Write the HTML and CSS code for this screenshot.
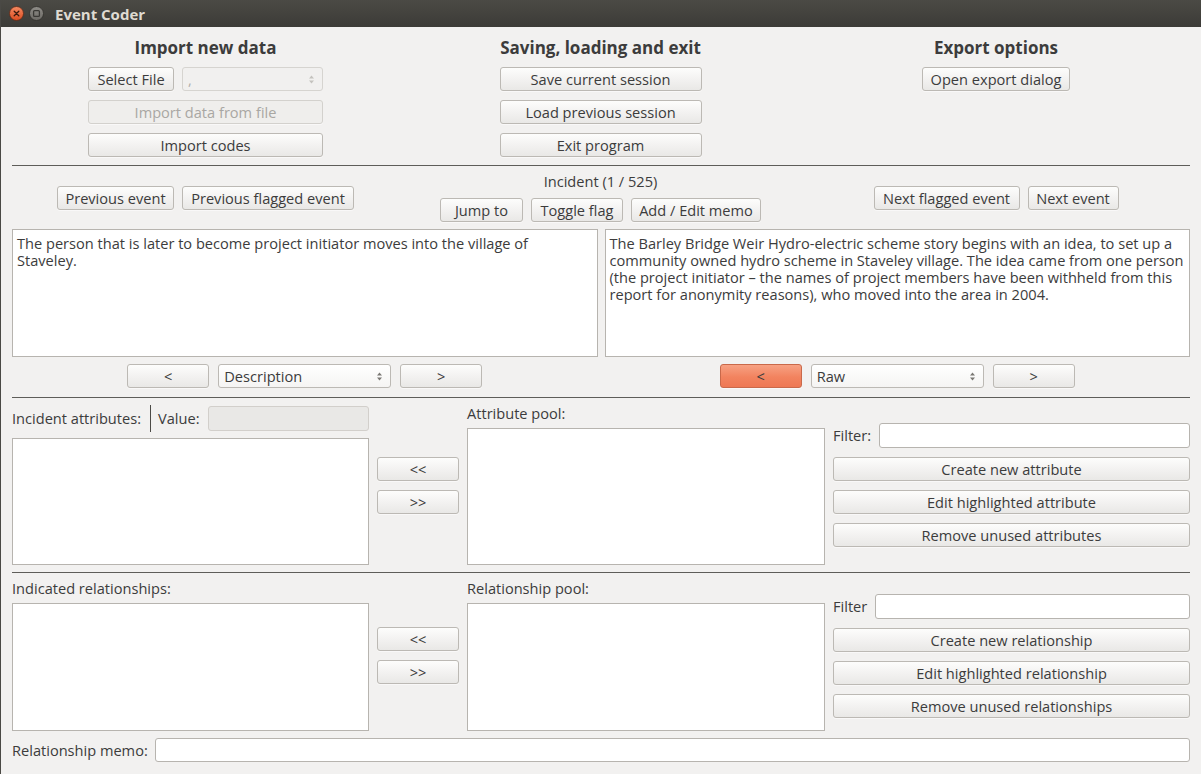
FILE: index.html
```html
<!DOCTYPE html>
<html>
<head>
<meta charset="utf-8">
<title>Event Coder</title>
<link rel="stylesheet" href="styles.css">
</head>
<body>
<div class="window">
  <div class="titlebar">
    <span class="tb-btn tb-close"><svg width="15" height="15" viewBox="0 0 15 15"><defs><linearGradient id="gc" x1="0" y1="0" x2="0" y2="1"><stop offset="0" stop-color="#f58b63"/><stop offset="1" stop-color="#dc4c20"/></linearGradient></defs><circle cx="7.5" cy="7.5" r="7" fill="url(#gc)" stroke="#5a2a18" stroke-width="0.8"/><path d="M5.2 5.2 L9.8 9.8 M9.8 5.2 L5.2 9.8" stroke="#3a1a0e" stroke-width="1.3" stroke-linecap="round"/></svg></span>
    <span class="tb-btn tb-max"><svg width="15" height="15" viewBox="0 0 15 15"><defs><linearGradient id="gm" x1="0" y1="0" x2="0" y2="1"><stop offset="0" stop-color="#8f8d88"/><stop offset="1" stop-color="#6c6a65"/></linearGradient></defs><circle cx="7.5" cy="7.5" r="7" fill="url(#gm)" stroke="#2e2d2a" stroke-width="0.8"/><rect x="4.6" y="4.6" width="5.8" height="5.8" rx="1" fill="none" stroke="#3a3935" stroke-width="1.3"/></svg></span>
    <span class="tb-title">Event Coder</span>
  </div>

  <div class="content">
    <div class="top">
      <div class="col">
        <h2 class="heading">Import new data</h2>
        <div class="stack w235">
          <div class="pair">
            <button class="btn w86">Select File</button>
            <div class="combo combo-disabled w141"><span>,</span><svg class="arrows" width="7" height="11" viewBox="0 0 7 11"><path d="M3.5 1.5 L6 4.5 L1 4.5 Z M1 6.5 L6 6.5 L3.5 9.5 Z" fill="#c4c2be"/></svg></div>
          </div>
          <button class="btn btn-disabled">Import data from file</button>
          <button class="btn">Import codes</button>
        </div>
      </div>
      <div class="col">
        <h2 class="heading">Saving, loading and exit</h2>
        <div class="stack w202">
          <button class="btn">Save current session</button>
          <button class="btn">Load previous session</button>
          <button class="btn">Exit program</button>
        </div>
      </div>
      <div class="col">
        <h2 class="heading">Export options</h2>
        <div class="stack w148">
          <button class="btn">Open export dialog</button>
        </div>
      </div>
    </div>

    <div class="sep sep-top"></div>

    <div class="nav">
      <div class="nav-side">
        <button class="btn w117">Previous event</button>
        <button class="btn w172">Previous flagged event</button>
      </div>
      <div class="nav-mid">
        <div class="incident">Incident (1 / 525)</div>
        <div class="nav-row">
          <button class="btn w83">Jump to</button>
          <button class="btn w92">Toggle flag</button>
          <button class="btn w130">Add / Edit memo</button>
        </div>
      </div>
      <div class="nav-side">
        <button class="btn w146">Next flagged event</button>
        <button class="btn w91">Next event</button>
      </div>
    </div>

    <div class="texts">
      <div class="textbox">The person that is later to become project initiator moves into the village of<br>Staveley.</div>
      <div class="textbox">The Barley Bridge Weir Hydro-electric scheme story begins with an idea, to set up a<br>community owned hydro scheme in Staveley village. The idea came from one person<br>(the project initiator – the names of project members have been withheld from this<br>report for anonymity reasons), who moved into the area in 2004.</div>
    </div>

    <div class="views">
      <div class="view-ctrl">
        <button class="btn w82">&lt;</button>
        <div class="combo w173"><span>Description</span><svg class="arrows" width="7" height="11" viewBox="0 0 7 11"><path d="M3.5 1.5 L6 4.5 L1 4.5 Z M1 6.5 L6 6.5 L3.5 9.5 Z" fill="#7a7874"/></svg></div>
        <button class="btn w82">&gt;</button>
      </div>
      <div class="view-ctrl">
        <button class="btn btn-accent w82">&lt;</button>
        <div class="combo w173"><span>Raw</span><svg class="arrows" width="7" height="11" viewBox="0 0 7 11"><path d="M3.5 1.5 L6 4.5 L1 4.5 Z M1 6.5 L6 6.5 L3.5 9.5 Z" fill="#7a7874"/></svg></div>
        <button class="btn w82">&gt;</button>
      </div>
    </div>

    <div class="sep sep-mid"></div>

    <div class="pane pane-attr">
      <div class="pane-left">
        <div class="attr-head">
          <span class="label">Incident attributes:</span>
          <span class="vsep"></span>
          <span class="label">Value:</span>
          <div class="field field-disabled"></div>
        </div>
        <div class="list list-attr"></div>
      </div>
      <div class="pane-mid">
        <button class="btn">&lt;&lt;</button>
        <button class="btn">&gt;&gt;</button>
      </div>
      <div class="pane-pool">
        <div class="label">Attribute pool:</div>
        <div class="list"></div>
      </div>
      <div class="pane-right">
        <div class="filter-row">
          <span class="label">Filter:</span>
          <div class="field"></div>
        </div>
        <button class="btn">Create new attribute</button>
        <button class="btn">Edit highlighted attribute</button>
        <button class="btn">Remove unused attributes</button>
      </div>
    </div>

    <div class="sep sep-low"></div>

    <div class="pane pane-rel">
      <div class="pane-left">
        <div class="label">Indicated relationships:</div>
        <div class="list"></div>
      </div>
      <div class="pane-mid">
        <button class="btn">&lt;&lt;</button>
        <button class="btn">&gt;&gt;</button>
      </div>
      <div class="pane-pool">
        <div class="label">Relationship pool:</div>
        <div class="list"></div>
      </div>
      <div class="pane-right">
        <div class="filter-row">
          <span class="label">Filter</span>
          <div class="field"></div>
        </div>
        <button class="btn">Create new relationship</button>
        <button class="btn">Edit highlighted relationship</button>
        <button class="btn">Remove unused relationships</button>
      </div>
    </div>

    <div class="memo">
      <span class="label">Relationship memo:</span>
      <div class="field field-memo"></div>
    </div>
  </div>
</div>
</body>
</html>
```
FILE: styles.css
```css
* { box-sizing: border-box; }
html, body { margin: 0; padding: 0; }
body {
  width: 1201px;
  height: 774px;
  overflow: hidden;
  background: #f2f1f0;
  font-family: "Open Sans", "DejaVu Sans", sans-serif;
  font-size: 14.6px;
  color: #3c3c3c;
}
.window {
  height: 774px;
  display: flex;
  flex-direction: column;
  border-left: 1px solid #4a4945;
}
.titlebar {
  height: 27px;
  flex: none;
  background: linear-gradient(#4b4a45, #3c3b37);
  display: flex;
  align-items: center;
  padding-left: 8px;
}
.tb-btn { display: flex; width: 15px; height: 15px; }
.tb-max { margin-left: 5px; }
.tb-title {
  margin-left: 11px;
  color: #dfdbd2;
  font-weight: 700;
  font-size: 15px;
}
.content {
  flex: 1;
  padding: 0 11px;
  display: flex;
  flex-direction: column;
}
.top {
  display: grid;
  grid-template-columns: 387px 1fr 388px;
  padding-top: 10px;
}
.col { display: flex; flex-direction: column; align-items: center; }
.heading {
  margin: 0 0 8px;
  font-size: 17px;
  line-height: 22px;
  font-weight: 700;
  color: #3c3c3c;
}
.stack { display: flex; flex-direction: column; gap: 9px; }
.pair { display: flex; gap: 8px; }
.w235 { width: 235px; }
.w202 { width: 202px; }
.w148 { width: 148px; }
.w86 { width: 86px; }
.w141 { width: 141px; }
.w117 { width: 117px; }
.w172 { width: 172px; }
.w83 { width: 83px; }
.w92 { width: 92px; }
.w130 { width: 130px; }
.w146 { width: 146px; }
.w91 { width: 91px; }
.w82 { width: 82px; }
.w173 { width: 173px; }

.btn {
  height: 24px;
  margin: 0;
  border: 1px solid #bcb9b4;
  border-radius: 3px;
  background: linear-gradient(#fdfdfc, #f3f2f1 50%, #e9e8e6);
  font: inherit;
  color: #3c3c3c;
  padding: 0 4px;
  display: flex;
  align-items: center;
  justify-content: center;
  white-space: nowrap;
  box-shadow: 0 1px 0 rgba(255,255,255,0.5);
}
.btn-disabled {
  color: #a9a7a3;
  background: #efeeec;
  border-color: #d3d1cd;
}
.btn-accent {
  background: linear-gradient(#f7a183, #f2835f 55%, #ee7854);
  border-color: #c9694a;
  color: #3c3c3c;
}
.combo {
  height: 24px;
  border: 1px solid #bcb9b4;
  border-radius: 3px;
  background: linear-gradient(#ffffff, #f5f4f3);
  display: flex;
  align-items: center;
  justify-content: space-between;
  padding: 0 7px 0 5px;
}
.combo-disabled {
  background: #f1f0ef;
  border-color: #d6d4d0;
  color: #b0aeaa;
}
.sep { height: 1px; background: #5e5d59; flex: none; }
.sep-top { margin-top: 8px; }
.sep-mid { margin-top: 9px; }
.sep-low { margin-top: 7px; }

.nav {
  display: grid;
  grid-template-columns: 387px 1fr 388px;
  align-items: center;
  padding-top: 7px;
}
.nav-side { display: flex; justify-content: center; gap: 8px; }
.nav-mid { display: flex; flex-direction: column; align-items: center; }
.incident { line-height: 17px; margin-bottom: 8px; }
.nav-row { display: flex; gap: 8px; }

.texts {
  display: grid;
  grid-template-columns: 1fr 1fr;
  gap: 7px;
  margin-top: 7px;
  height: 128px;
}
.textbox {
  background: #ffffff;
  border: 1px solid #b7b4af;
  padding: 5px 4px;
  line-height: 17px;
  white-space: nowrap;
  overflow: hidden;
}
.views {
  display: grid;
  grid-template-columns: 1fr 1fr;
  gap: 7px;
  margin-top: 7px;
}
.view-ctrl { display: flex; justify-content: center; gap: 9px; }

.pane {
  display: grid;
  grid-template-columns: 357px 82px 358px 1fr;
  column-gap: 8px;
  margin-top: 7px;
}
.pane-attr { height: 160px; }
.pane-rel { height: 151px; }
.pane-left, .pane-pool { display: flex; flex-direction: column; }
.pane-mid, .pane-right {
  align-self: center;
  display: flex;
  flex-direction: column;
  gap: 9px;
}
.label { line-height: 17px; white-space: nowrap; }
.list {
  flex: 1;
  margin-top: 6px;
  background: #ffffff;
  border: 1px solid #b7b4af;
}
.attr-head { height: 27px; display: flex; align-items: center; }
.vsep { width: 1px; height: 27px; background: #4c4b47; margin: 0 7px 0 9px; }
.field {
  flex: 1;
  height: 25px;
  margin-left: 8px;
  background: #ffffff;
  border: 1px solid #b7b4af;
  border-radius: 3px;
}
.field-disabled {
  background: #e9e8e6;
  border-color: #d2cfcb;
  margin-left: 9px;
}
.filter-row { display: flex; align-items: center; }
.memo {
  display: flex;
  align-items: center;
  margin-top: 7px;
}
.field-memo { height: 24px; margin-left: 7px; }
```
